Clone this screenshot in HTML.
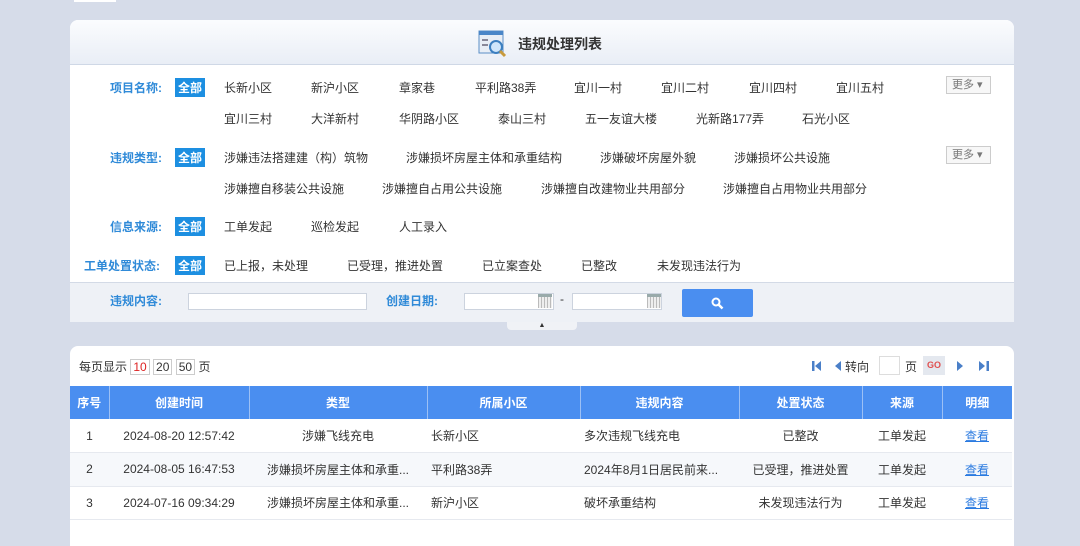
<!DOCTYPE html>
<html><head><meta charset="utf-8">
<style>
*{margin:0;padding:0;box-sizing:border-box}
body{width:1080px;height:524px;overflow:hidden;background:#d6dce9;font-family:"Liberation Sans","Noto Sans CJK SC",sans-serif;font-size:12px;color:#333;position:relative}
.a{position:absolute;white-space:nowrap}
.panel{position:absolute;left:70px;top:20px;width:944px;height:302px;background:#fff;border-radius:8px 8px 0 0;overflow:hidden}
.hd{position:absolute;left:0;top:0;width:944px;height:45px;background:linear-gradient(#fbfcfe,#e9eef6);border-bottom:1px solid #cfd8e6}
.f{position:absolute;left:0;top:-1px;width:944px;height:262px}
.lbl{color:#2f8ad8;font-weight:bold;font-size:12px}
.all{background:#1d8fe1;color:#fff;font-weight:bold;padding:1px 3px;font-size:12px}
.more{border:1px solid #ccc;background:#f7f7f7;color:#777;font-size:11px;padding:0 5px;width:45px;height:18px;line-height:16px}
.srch{position:absolute;left:0;top:262px;width:944px;height:40px;background:#eef1f6;border-top:1px solid #d3dae6}
.inp{position:absolute;height:17px;background:#fff;border:1px solid #ccd3de}
.p2{position:absolute;left:70px;top:346px;width:944px;height:200px;background:#fff;border-radius:8px 8px 0 0}
table{position:absolute;left:70px;top:386px;border-collapse:collapse;width:942px}
th{background:#4a8ef0;color:#fff;font-weight:bold;height:33px;border-right:1px solid #9cc0f5;font-size:12px}
td{height:33.5px;border-bottom:1px solid #e6e9ef;font-size:12px}
tr.g td{background:#f6f8fb}
.c{text-align:center}
a{color:#2a7ae0;text-decoration:underline}
</style></head><body>
<div class="a" style="left:74px;top:0;width:42px;height:2px;background:#fff"></div>
<div class="panel">
 <div class="hd">
  <svg class="a" style="left:408px;top:9px" width="30" height="30" viewBox="0 0 30 30"><rect x="1" y="2" width="24" height="22" fill="#e8eef6" stroke="#5b8fc6"/><rect x="1" y="2" width="24" height="4" fill="#4a86c8"/><rect x="4" y="10" width="6" height="2" fill="#889"/><rect x="4" y="15" width="6" height="2" fill="#889"/><circle cx="18" cy="18" r="6" fill="#cfe6fb" stroke="#3c7fc0" stroke-width="2"/><line x1="22" y1="22" x2="27" y2="27" stroke="#c89a3c" stroke-width="3"/></svg>
  <div class="a" style="left:448px;top:14px;font-size:14px;font-weight:bold;color:#333">违规处理列表</div>
 </div>
 <div class="f">
 <div class="a lbl" style="left:40px;top:60px">项目名称:</div><div class="a all" style="left:105px;top:59px">全部</div>
 <div class="a" style="left:154px;top:60px">长新小区</div><div class="a" style="left:241px;top:60px">新沪小区</div><div class="a" style="left:329px;top:60px">章家巷</div><div class="a" style="left:405px;top:60px">平利路38弄</div><div class="a" style="left:504px;top:60px">宜川一村</div><div class="a" style="left:591px;top:60px">宜川二村</div><div class="a" style="left:679px;top:60px">宜川四村</div><div class="a" style="left:766px;top:60px">宜川五村</div>
 <div class="a more" style="left:876px;top:57px">更多 ▾</div>
 <div class="a" style="left:154px;top:91px">宜川三村</div><div class="a" style="left:241px;top:91px">大洋新村</div><div class="a" style="left:329px;top:91px">华阴路小区</div><div class="a" style="left:428px;top:91px">泰山三村</div><div class="a" style="left:515px;top:91px">五一友谊大楼</div><div class="a" style="left:626px;top:91px">光新路177弄</div><div class="a" style="left:732px;top:91px">石光小区</div>
 <div class="a lbl" style="left:40px;top:130px">违规类型:</div><div class="a all" style="left:105px;top:129px">全部</div>
 <div class="a" style="left:154px;top:130px">涉嫌违法搭建建（构）筑物</div><div class="a" style="left:336px;top:130px">涉嫌损坏房屋主体和承重结构</div><div class="a" style="left:530px;top:130px">涉嫌破坏房屋外貌</div><div class="a" style="left:664px;top:130px">涉嫌损坏公共设施</div>
 <div class="a more" style="left:876px;top:127px">更多 ▾</div>
 <div class="a" style="left:154px;top:161px">涉嫌擅自移装公共设施</div><div class="a" style="left:312px;top:161px">涉嫌擅自占用公共设施</div><div class="a" style="left:471px;top:161px">涉嫌擅自改建物业共用部分</div><div class="a" style="left:653px;top:161px">涉嫌擅自占用物业共用部分</div>
 <div class="a lbl" style="left:40px;top:199px">信息来源:</div><div class="a all" style="left:105px;top:198px">全部</div>
 <div class="a" style="left:154px;top:199px">工单发起</div><div class="a" style="left:241px;top:199px">巡检发起</div><div class="a" style="left:329px;top:199px">人工录入</div>
 <div class="a lbl" style="left:14px;top:238px">工单处置状态:</div><div class="a all" style="left:105px;top:237px">全部</div>
 <div class="a" style="left:154px;top:238px">已上报，未处理</div><div class="a" style="left:277px;top:238px">已受理，推进处置</div><div class="a" style="left:412px;top:238px">已立案查处</div><div class="a" style="left:511px;top:238px">已整改</div><div class="a" style="left:587px;top:238px">未发现违法行为</div>
 </div>
 <div class="srch">
  <div class="a lbl" style="left:40px;top:9px">违规内容:</div>
  <div class="inp" style="left:118px;top:10px;width:179px"></div>
  <div class="a lbl" style="left:316px;top:9px">创建日期:</div>
  <div class="inp" style="left:394px;top:10px;width:90px"></div>
  <div class="a" style="left:468px;top:11px;width:14px;height:14px;background:repeating-linear-gradient(90deg,#bbb 0 1px,#eee 1px 3px);border-top:3px solid #9aa"></div>
  <div class="a" style="left:490px;top:9px">-</div>
  <div class="inp" style="left:502px;top:10px;width:90px"></div>
  <div class="a" style="left:577px;top:11px;width:14px;height:14px;background:repeating-linear-gradient(90deg,#bbb 0 1px,#eee 1px 3px);border-top:3px solid #9aa"></div>
  <div class="a" style="left:612px;top:6px;width:71px;height:28px;background:#4a8ef0;border-radius:2px"><svg style="position:absolute;left:29px;top:8px" width="13" height="13" viewBox="0 0 13 13"><circle cx="5" cy="5" r="3.5" fill="none" stroke="#fff" stroke-width="2"/><line x1="7.5" y1="7.5" x2="11.5" y2="11.5" stroke="#fff" stroke-width="2.5"/></svg></div>
 </div>
</div>
<div class="a" style="left:507px;top:322px;width:70px;height:8px;background:#f0f2f6;border-radius:0 0 4px 4px;text-align:center;font-size:7px;line-height:7px;color:#333">▲</div>
<div class="p2"></div>
<div class="a" style="left:79px;top:358px">每页显示 <span style="border:1px solid #ccc;color:#d22;padding:0 2px">10</span> <span style="border:1px solid #ccc;padding:0 2px">20</span> <span style="border:1px solid #ccc;padding:0 2px">50</span> 页</div>
<svg class="a" style="left:811px;top:360px" width="12" height="12" viewBox="0 0 12 12"><rect x="1" y="1" width="2.5" height="10" fill="#4a7fc8"/><path d="M10 1 L4 6 L10 11Z" fill="#4a7fc8"/></svg>
<svg class="a" style="left:835px;top:361px" width="7" height="10" viewBox="0 0 7 10"><path d="M6 0 L0 5 L6 10Z" fill="#4a7fc8"/></svg>
<div class="a" style="left:845px;top:358px">转向</div>
<div class="a" style="left:879px;top:356px;width:21px;height:19px;border:1px solid #ddd;background:#fff"></div>
<div class="a" style="left:905px;top:358px">页</div>
<div class="a" style="left:923px;top:356px;width:22px;height:19px;background:#e4e8ef;color:#e05050;font-size:9px;font-weight:bold;text-align:center;line-height:19px">GO</div>
<svg class="a" style="left:957px;top:361px" width="7" height="10" viewBox="0 0 7 10"><path d="M0 0 L6 5 L0 10Z" fill="#4a7fc8"/></svg>
<svg class="a" style="left:978px;top:360px" width="12" height="12" viewBox="0 0 12 12"><path d="M1 1 L7 6 L1 11Z" fill="#4a7fc8"/><rect x="8.5" y="1" width="2.5" height="10" fill="#4a7fc8"/></svg>
<table>
<tr><th style="width:39px">序号</th><th style="width:140px">创建时间</th><th style="width:178px">类型</th><th style="width:153px">所属小区</th><th style="width:159px">违规内容</th><th style="width:123px">处置状态</th><th style="width:80px">来源</th><th style="width:70px;border-right:0">明细</th></tr>
<tr><td class="c">1</td><td class="c">2024-08-20 12:57:42</td><td class="c">涉嫌飞线充电</td><td style="padding-left:4px">长新小区</td><td style="padding-left:4px">多次违规飞线充电</td><td class="c">已整改</td><td class="c">工单发起</td><td class="c"><a>查看</a></td></tr>
<tr class="g"><td class="c">2</td><td class="c">2024-08-05 16:47:53</td><td class="c">涉嫌损坏房屋主体和承重...</td><td style="padding-left:4px">平利路38弄</td><td style="padding-left:4px">2024年8月1日居民前来...</td><td class="c">已受理，推进处置</td><td class="c">工单发起</td><td class="c"><a>查看</a></td></tr>
<tr><td class="c">3</td><td class="c">2024-07-16 09:34:29</td><td class="c">涉嫌损坏房屋主体和承重...</td><td style="padding-left:4px">新沪小区</td><td style="padding-left:4px">破坏承重结构</td><td class="c">未发现违法行为</td><td class="c">工单发起</td><td class="c"><a>查看</a></td></tr>
</table>
</body></html>
